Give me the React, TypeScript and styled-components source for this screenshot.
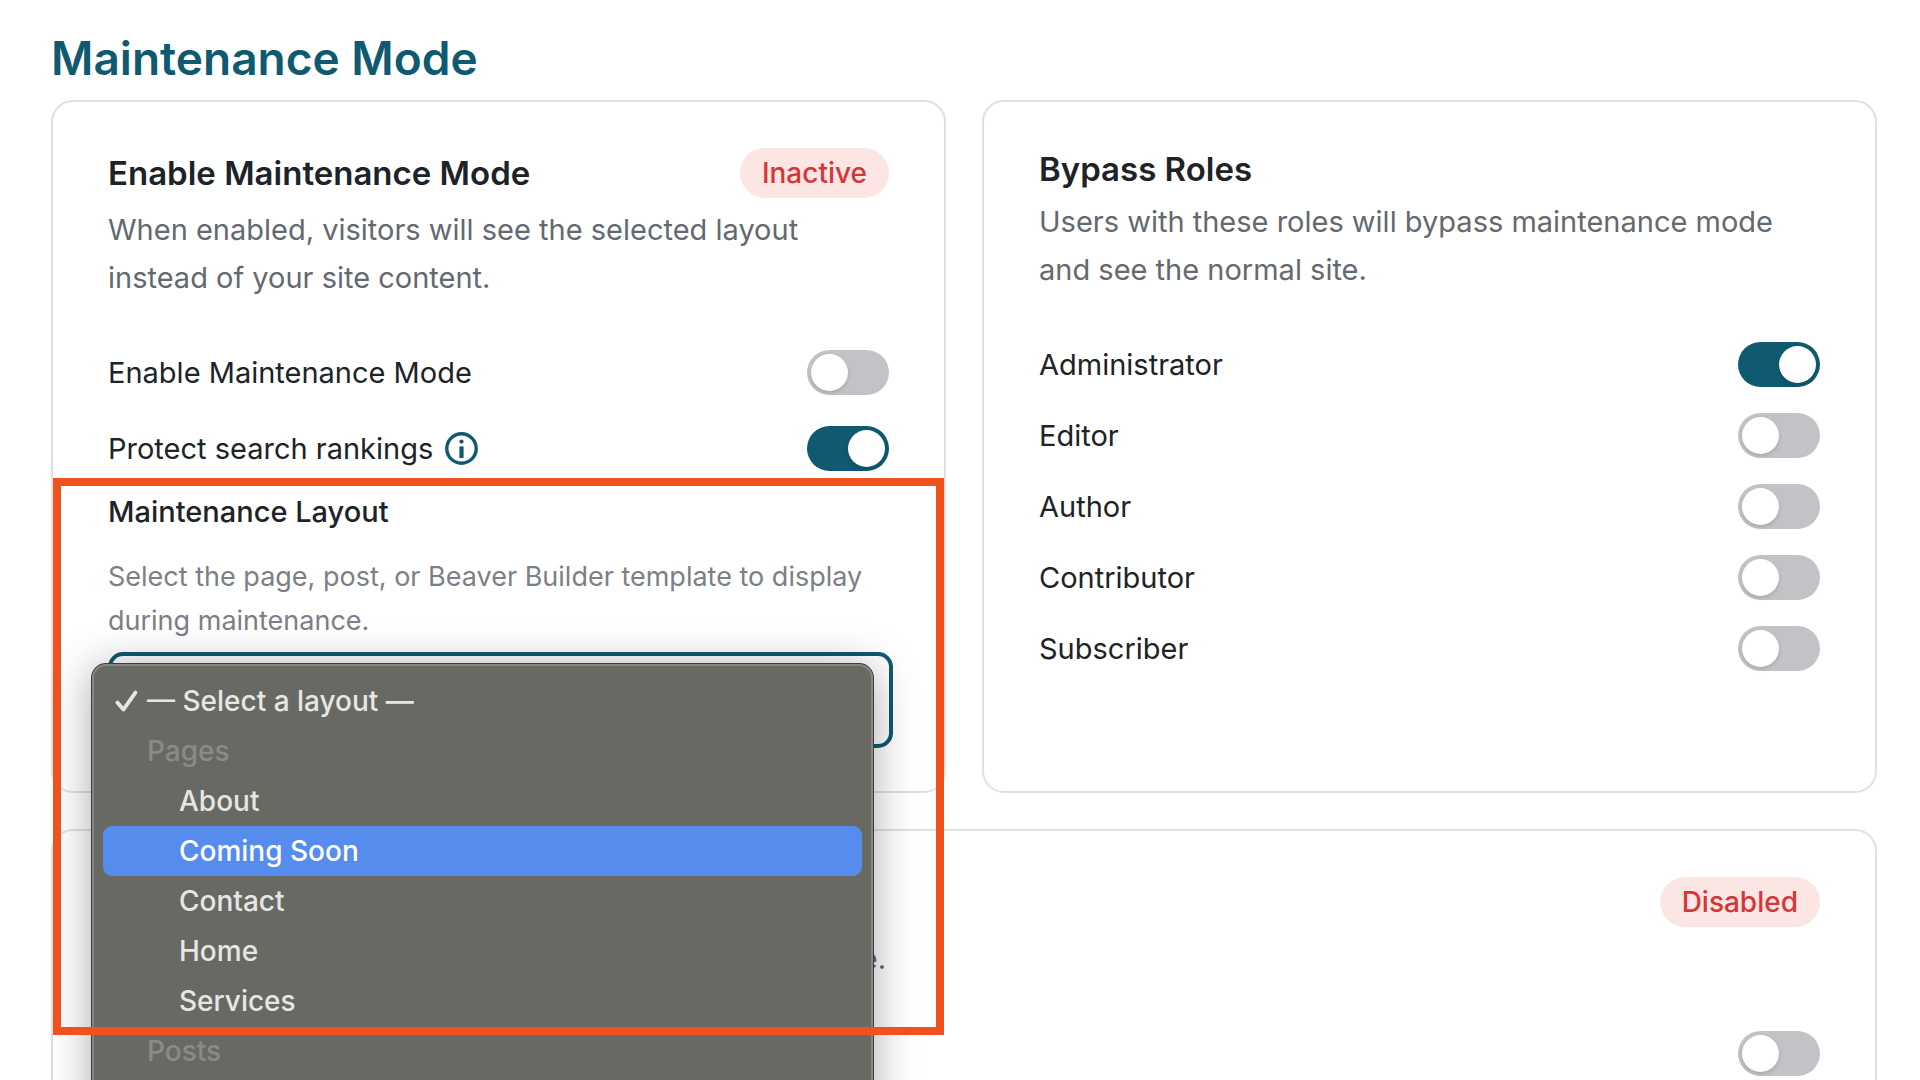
import React, { useState } from "react";
import styled, { createGlobalStyle, css } from "styled-components";

const color = {
  brand: "#0f5a70",
  ink: "#1d2327",
  muted: "#646970",
  hint: "#7c7f87",
  line: "#e0e0e0",
  danger: "#d63638",
  dangerSoft: "#fce6e4",
  off: "#c2c3c7",
  callout: "#f0521e",
};

const GlobalStyle = createGlobalStyle`
  *, *::before, *::after { box-sizing: border-box; }
  body {
    margin: 0;
    background: #fff;
    color: ${color.ink};
    font-family: Inter, "Liberation Sans", sans-serif;
  }
  h1, h2, h3, p, ul { margin: 0; padding: 0; }
  ul { list-style: none; }
`;

const Page = styled.main`
  height: 100vh;
  overflow: hidden;
  padding: 28px 43px 0 51px;
`;

const PageTitle = styled.h1`
  padding-bottom: 12px;
  color: ${color.brand};
  font-size: 46px;
  line-height: 60px;
  font-weight: 600;
`;

const Grid = styled.div`
  display: grid;
  grid-template-columns: 1fr 1fr;
  gap: 36px;
`;

const Card = styled.section<{ $wide?: boolean }>`
  padding: 46px 55px;
  border: 2px solid ${color.line};
  border-radius: 22px;
  ${(p) => p.$wide && css`grid-column: 1 / -1;`}
`;

const CardHeader = styled.header`
  display: flex;
  align-items: center;
  justify-content: space-between;
  min-height: 42px;
`;

const CardTitle = styled.h2`
  font-size: 33px;
  line-height: 42px;
  font-weight: 600;
`;

const Badge = styled.span`
  margin-left: auto;
  padding: 0 22px;
  border-radius: 25px;
  background: ${color.dangerSoft};
  color: ${color.danger};
  font-size: 28px;
  line-height: 50px;
  font-weight: 500;
`;

const Description = styled.p<{ $trailing?: boolean }>`
  margin-top: 8px;
  color: ${color.muted};
  font-size: 29px;
  line-height: 48px;
  ${(p) => p.$trailing && css`max-width: 778px; text-align: right;`}
`;

const Rows = styled.div<{ $gap: number }>`
  display: grid;
  gap: ${(p) => p.$gap}px;
  margin-top: 48px;
`;

const Row = styled.div`
  display: flex;
  align-items: center;
  justify-content: space-between;
  height: 45px;
`;

const RowText = styled.span`
  display: flex;
  align-items: center;
  gap: 12px;
  font-size: 29px;
  line-height: 36px;
`;

const Switch = styled.input`
  appearance: none;
  display: flex;
  align-items: center;
  flex: none;
  width: 82px;
  height: 45px;
  margin: 0 0 0 auto;
  padding: 0 4px;
  border-radius: 23px;
  background: ${color.off};
  cursor: pointer;

  &::before {
    content: "";
    width: 37px;
    height: 37px;
    border-radius: 50%;
    background: #fff;
    box-shadow: 0 2px 4px rgba(0, 0, 0, 0.14);
  }

  &:checked {
    justify-content: flex-end;
    background: ${color.brand};
  }
`;

const InfoButton = styled.button`
  display: flex;
  padding: 0;
  border: 0;
  background: none;
  color: ${color.brand};
  cursor: pointer;
`;

const LayoutField = styled.div`
  position: relative;
  margin-top: 23px;
`;

const FieldLabel = styled.label`
  display: block;
  font-size: 29px;
  line-height: 36px;
  font-weight: 500;
`;

const FieldHint = styled.p`
  margin: 25px 0 9px;
  color: ${color.hint};
  font-size: 27px;
  line-height: 44px;
`;

const SelectWrap = styled.div`
  position: relative;
  height: 93px;
`;

const Select = styled.select`
  appearance: none;
  display: block;
  width: calc(100% + 4px);
  height: 96px;
  padding: 0 24px;
  border: 4px solid ${color.brand};
  border-radius: 15px;
  outline: none;
  background: #fff;
  color: ${color.ink};
  font: inherit;
  font-size: 29px;
`;

const Menu = styled.ul`
  position: absolute;
  z-index: 1;
  top: 12px;
  left: -16px;
  right: 16px;
  min-height: 480px;
  padding: 10px 9px;
  border: 2px solid #868682;
  border-radius: 14px;
  background: #696964;
  box-shadow: 0 0 0 1px #3c3d3c, 0 4px 44px rgba(0, 0, 0, 0.34);
  color: #e6e6e5;
`;

const MenuItem = styled.li<{ $kind: "root" | "group" | "option"; $active?: boolean }>`
  display: flex;
  align-items: center;
  height: 50px;
  padding-left: ${(p) => (p.$kind === "root" ? 12 : p.$kind === "group" ? 44 : 76)}px;
  border-radius: 9px;
  font-size: 28px;
  font-weight: 500;
  ${(p) => p.$kind === "group" && css`color: #8a8a86;`}
  ${(p) => p.$active && css`background: #568ced; color: #fff;`}
`;

const Check = styled.svg`
  flex: none;
  margin-right: 9px;
`;

const Callout = styled.div`
  position: absolute;
  z-index: 2;
  top: -16px;
  left: -55px;
  right: -55px;
  height: 557px;
  border: 8px solid ${color.callout};
  pointer-events: none;
`;

const roles = ["Administrator", "Editor", "Author", "Contributor", "Subscriber"];

const layouts: { text: string; kind: "group" | "option" }[] = [
  { text: "Pages", kind: "group" },
  { text: "About", kind: "option" },
  { text: "Coming Soon", kind: "option" },
  { text: "Contact", kind: "option" },
  { text: "Home", kind: "option" },
  { text: "Services", kind: "option" },
  { text: "Posts", kind: "group" },
];

function ToggleRow({ id, text, on, info }: { id: string; text: string; on?: boolean; info?: boolean }) {
  const [checked, setChecked] = useState(!!on);
  return (
    <Row>
      <RowText>
        <label htmlFor={id}>{text}</label>
        {info && (
          <InfoButton type="button" aria-label="About search rankings">
            <svg width="33" height="33" viewBox="0 0 33 33" fill="none">
              <circle cx="16.5" cy="16.5" r="14.7" stroke="currentColor" strokeWidth="3.4" />
              <circle cx="16.5" cy="9.6" r="2.1" fill="currentColor" />
              <rect x="14.4" y="14.4" width="4.2" height="11.6" fill="currentColor" />
            </svg>
          </InfoButton>
        )}
      </RowText>
      <Switch id={id} type="checkbox" role="switch" checked={checked} onChange={() => setChecked(!checked)} />
    </Row>
  );
}

function LayoutPicker() {
  const [active, setActive] = useState("Coming Soon");
  return (
    <LayoutField>
      <FieldLabel htmlFor="layout">Maintenance Layout</FieldLabel>
      <FieldHint>Select the page, post, or Beaver Builder template to display during maintenance.</FieldHint>
      <SelectWrap>
        <Select id="layout" />
        <Menu role="listbox" aria-label="Maintenance Layout">
          <MenuItem role="option" aria-selected $kind="root">
            <Check width="23" height="23" viewBox="0 0 23 23" fill="none">
              <path d="M2.4 12.6 8.4 19.6 20.4 2.6" stroke="currentColor" strokeWidth="3.8" strokeLinecap="round" strokeLinejoin="round" />
            </Check>
            — Select a layout —
          </MenuItem>
          {layouts.map((l) => (
            <MenuItem
              key={l.text}
              role={l.kind === "option" ? "option" : "presentation"}
              $kind={l.kind}
              $active={l.text === active}
              onMouseEnter={() => l.kind === "option" && setActive(l.text)}
            >
              {l.text}
            </MenuItem>
          ))}
        </Menu>
      </SelectWrap>
      <Callout />
    </LayoutField>
  );
}

export default function App() {
  return (
    <Page>
      <GlobalStyle />
      <PageTitle>Maintenance Mode</PageTitle>
      <Grid>
        <Card>
          <CardHeader>
            <CardTitle>Enable Maintenance Mode</CardTitle>
            <Badge>Inactive</Badge>
          </CardHeader>
          <Description>When enabled, visitors will see the selected layout instead of your site content.</Description>
          <Rows $gap={31}>
            <ToggleRow id="enable" text="Enable Maintenance Mode" />
            <ToggleRow id="protect" text="Protect search rankings" on info />
          </Rows>
          <LayoutPicker />
        </Card>
        <Card>
          <CardHeader>
            <CardTitle>Bypass Roles</CardTitle>
          </CardHeader>
          <Description>Users with these roles will bypass maintenance mode and see the normal site.</Description>
          <Rows $gap={26}>
            {roles.map((role, i) => (
              <ToggleRow key={role} id={role.toLowerCase()} text={role} on={i === 0} />
            ))}
          </Rows>
        </Card>
        <Card $wide>
          <CardHeader>
            <Badge>Disabled</Badge>
          </CardHeader>
          <Description $trailing>e.</Description>
          <Rows $gap={26}>
            <Row>
              <Switch type="checkbox" role="switch" aria-label="Disabled" />
            </Row>
          </Rows>
        </Card>
      </Grid>
    </Page>
  );
}
